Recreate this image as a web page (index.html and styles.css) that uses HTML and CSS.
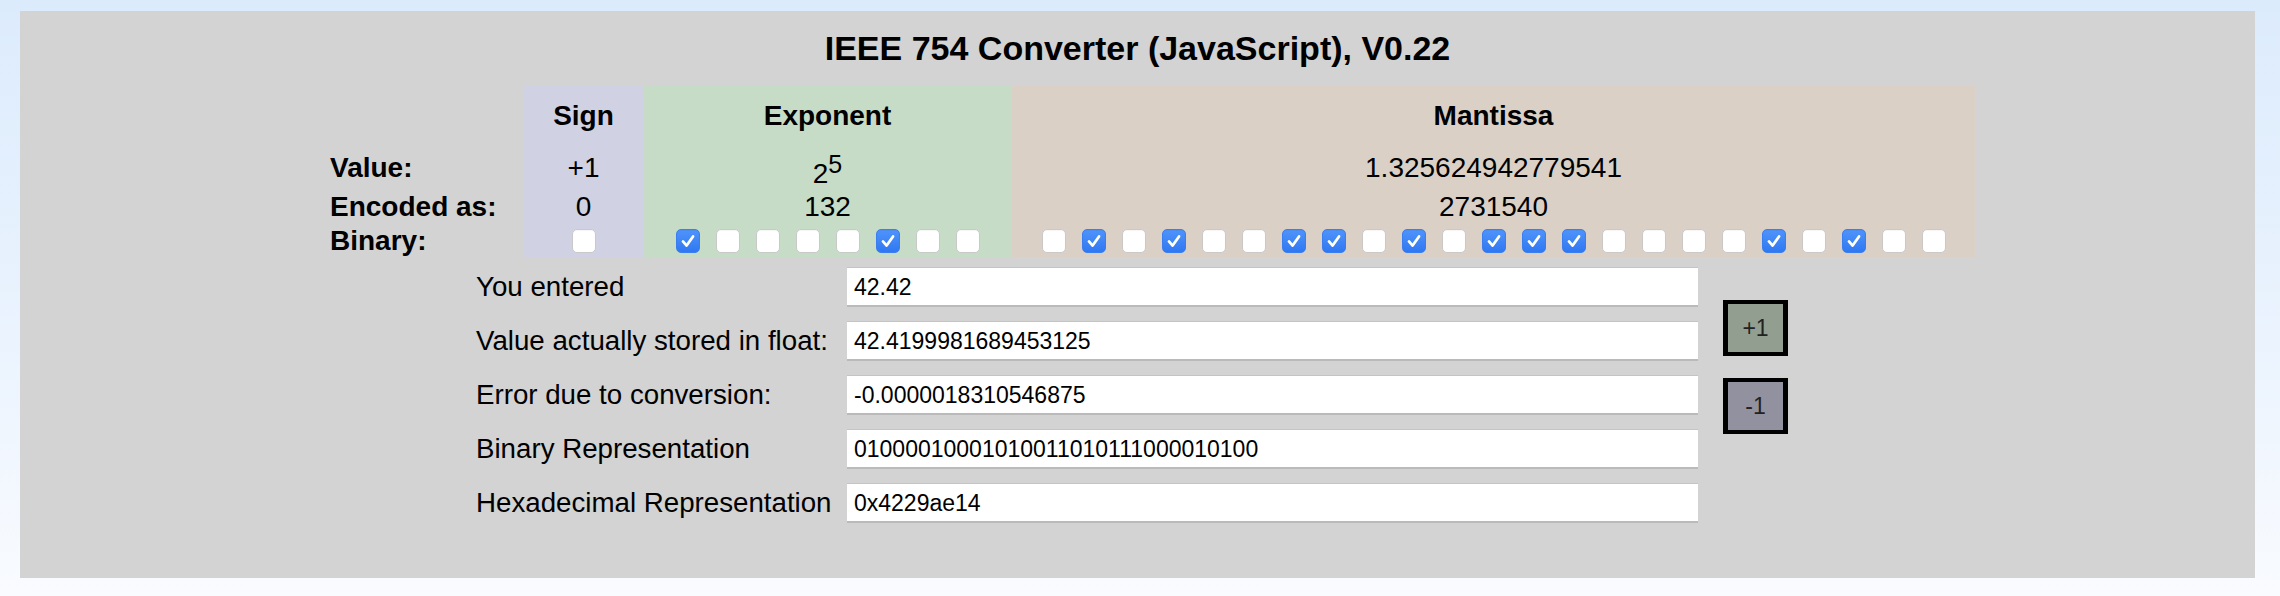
FILE: index.html
```html
<!DOCTYPE html>
<html>
<head>
<meta charset="utf-8">
<title>IEEE 754 Converter</title>
<link rel="stylesheet" href="styles.css">
</head>
<body>
<div class="panel">
  <h1 class="title">IEEE 754 Converter (JavaScript), V0.22</h1>

  <div class="bits">
    <div class="cell lab"></div>
    <div class="cell sign head">Sign</div>
    <div class="cell exp head">Exponent</div>
    <div class="cell mant head">Mantissa</div>

    <div class="cell lab val">Value:</div>
    <div class="cell sign val">+1</div>
    <div class="cell exp val"><span class="base">2</span><sup>5</sup></div>
    <div class="cell mant val">1.325624942779541</div>

    <div class="cell lab enc">Encoded as:</div>
    <div class="cell sign enc">0</div>
    <div class="cell exp enc">132</div>
    <div class="cell mant enc">2731540</div>

    <div class="cell lab bin">Binary:</div>
    <div class="cell sign bin boxes"><span class="cb"></span></div>
    <div class="cell exp bin boxes">
      <span class="cb on"><svg viewBox="0 0 24 24"><path d="M6.5 12.5 L10.5 17 L17.5 7"/></svg></span>
      <span class="cb"></span><span class="cb"></span><span class="cb"></span><span class="cb"></span>
      <span class="cb on"><svg viewBox="0 0 24 24"><path d="M6.5 12.5 L10.5 17 L17.5 7"/></svg></span>
      <span class="cb"></span><span class="cb"></span>
    </div>
    <div class="cell mant bin boxes">
      <span class="cb"></span>
      <span class="cb on"><svg viewBox="0 0 24 24"><path d="M6.5 12.5 L10.5 17 L17.5 7"/></svg></span>
      <span class="cb"></span>
      <span class="cb on"><svg viewBox="0 0 24 24"><path d="M6.5 12.5 L10.5 17 L17.5 7"/></svg></span>
      <span class="cb"></span><span class="cb"></span>
      <span class="cb on"><svg viewBox="0 0 24 24"><path d="M6.5 12.5 L10.5 17 L17.5 7"/></svg></span>
      <span class="cb on"><svg viewBox="0 0 24 24"><path d="M6.5 12.5 L10.5 17 L17.5 7"/></svg></span>
      <span class="cb"></span>
      <span class="cb on"><svg viewBox="0 0 24 24"><path d="M6.5 12.5 L10.5 17 L17.5 7"/></svg></span>
      <span class="cb"></span>
      <span class="cb on"><svg viewBox="0 0 24 24"><path d="M6.5 12.5 L10.5 17 L17.5 7"/></svg></span>
      <span class="cb on"><svg viewBox="0 0 24 24"><path d="M6.5 12.5 L10.5 17 L17.5 7"/></svg></span>
      <span class="cb on"><svg viewBox="0 0 24 24"><path d="M6.5 12.5 L10.5 17 L17.5 7"/></svg></span>
      <span class="cb"></span><span class="cb"></span><span class="cb"></span><span class="cb"></span>
      <span class="cb on"><svg viewBox="0 0 24 24"><path d="M6.5 12.5 L10.5 17 L17.5 7"/></svg></span>
      <span class="cb"></span>
      <span class="cb on"><svg viewBox="0 0 24 24"><path d="M6.5 12.5 L10.5 17 L17.5 7"/></svg></span>
      <span class="cb"></span><span class="cb"></span>
    </div>
  </div>

  <div class="lower">
    <div class="fields">
      <label class="flabel">You entered</label>
      <input class="field" type="text" value="42.42">
      <label class="flabel">Value actually stored in float:</label>
      <input class="field" type="text" value="42.4199981689453125">
      <label class="flabel">Error due to conversion:</label>
      <input class="field" type="text" value="-0.0000018310546875">
      <label class="flabel">Binary Representation</label>
      <input class="field" type="text" value="01000010001010011010111000010100">
      <label class="flabel">Hexadecimal Representation</label>
      <input class="field" type="text" value="0x4229ae14">
    </div>
    <div class="steps">
      <button class="step plus" type="button">+1</button>
      <button class="step minus" type="button">-1</button>
    </div>
  </div>
</div>
</body>
</html>
```

FILE: styles.css
```css
html, body {
  margin: 0;
  padding: 0;
}
body {
  width: 2280px;
  height: 596px;
  overflow: hidden;
  background: linear-gradient(to bottom, #dcebfc 0%, #eaf3fe 55%, #f9fbff 100%);
  font-family: "Liberation Sans", Arial, Helvetica, sans-serif;
  color: #000;
}
.panel {
  margin: 11px 25px 0 20px;
  height: 567px;
  box-sizing: border-box;
  padding-top: 17px;
  background: #d3d3d3;
}
.title {
  margin: 0;
  font-size: 34px;
  line-height: 40px;
  font-weight: bold;
  text-align: center;
}
.bits {
  display: grid;
  grid-template-columns: 194px 119px 369px 963px;
  grid-template-rows: 62px 38px 36px 35px;
  margin: 18px 0 0 310px;
  width: max-content;
  font-size: 28px;
  line-height: 30px;
}
.cell {
  text-align: center;
  box-sizing: border-box;
}
.cell.lab {
  text-align: left;
  font-weight: bold;
}
.sign { background: #d0d2e3; }
.exp { background: #c6dcc7; }
.mant { background: #dbd0c6; }
.head {
  font-weight: bold;
  padding-top: 15px;
}
.val { padding-top: 5px; }
.enc { padding-top: 6px; }
.lab.bin { padding-top: 4px; }
.boxes {
  display: flex;
  justify-content: center;
  gap: 16px;
  padding-top: 7px;
}
.base {
  vertical-align: -6px;
}
sup {
  font-size: 25px;
  line-height: 0;
  vertical-align: 4px;
}
.cb {
  width: 24px;
  height: 24px;
  box-sizing: border-box;
  border-radius: 5px;
  background: #fff;
  border: 1px solid #c9c9c9;
  box-shadow: inset 0 1px 1px rgba(0,0,0,0.04);
  display: block;
}
.cb.on {
  background: linear-gradient(to bottom, #4f93fb, #2f78f2);
  border-color: #3a7ef0;
}
.cb svg {
  display: block;
  width: 22px;
  height: 22px;
}
.cb svg path {
  fill: none;
  stroke: #fff;
  stroke-width: 3;
  stroke-linecap: round;
  stroke-linejoin: round;
}
.lower {
  display: flex;
  align-items: flex-start;
  margin: 10px 0 0 456px;
}
.fields {
  display: grid;
  grid-template-columns: 371px 851px;
  grid-auto-rows: 40px;
  row-gap: 14px;
}
.flabel {
  font-size: 27.7px;
  line-height: 40px;
}
.field {
  margin: 0;
  height: 40px;
  box-sizing: border-box;
  border: 0;
  border-top: 1px solid #c4c4c4;
  border-bottom: 2px solid #bababa;
  background: #fff;
  padding: 2px 7px 0;
  font-family: "Liberation Sans", Arial, sans-serif;
  font-size: 23px;
  color: #000;
  outline: none;
}
.steps {
  display: flex;
  flex-direction: column;
  gap: 22px;
  margin: 33px 0 0 25px;
}
.step {
  width: 65px;
  height: 56px;
  box-sizing: border-box;
  border: solid #000;
  border-width: 4px 5px;
  padding: 0;
  font-family: "Liberation Sans", Arial, sans-serif;
  font-size: 23px;
  color: #222;
}
.plus { background: #929e90; }
.minus { background: #9291a0; }
```
